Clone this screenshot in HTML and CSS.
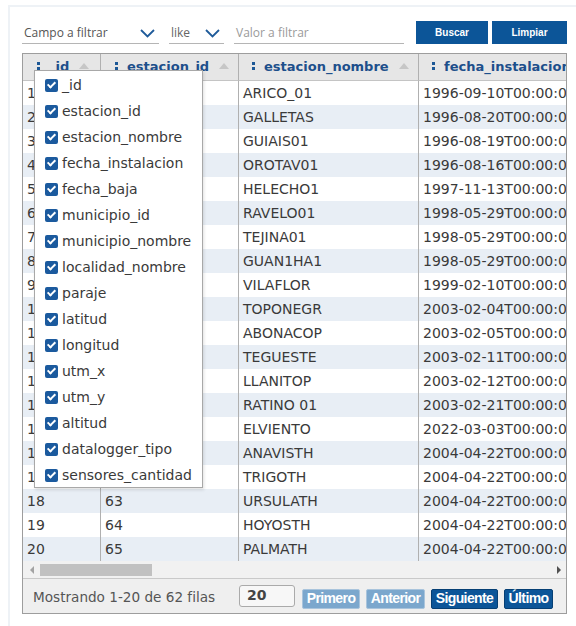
FILE: index.html
```html
<!DOCTYPE html>
<html lang="es">
<head>
<meta charset="utf-8">
<title>Estaciones</title>
<link rel="stylesheet" href="styles.css">
</head>
<body>
<div class="page">
  <div class="filters">
    <div class="select sel-field">
      <span>Campo a filtrar</span>
      <svg class="chev" width="15" height="9" viewBox="0 0 15 9"><polyline points="1,1 7.5,7.5 14,1" fill="none" stroke="#1f5b9a" stroke-width="1.8"/></svg>
    </div>
    <div class="select sel-op">
      <span>like</span>
      <svg class="chev" width="15" height="9" viewBox="0 0 15 9"><polyline points="1,1 7.5,7.5 14,1" fill="none" stroke="#1f5b9a" stroke-width="1.8"/></svg>
    </div>
    <div class="text-input"><span class="ph">Valor a filtrar</span></div>
    <button class="btn-main btn-search">Buscar</button>
    <button class="btn-main btn-clear">Limpiar</button>
  </div>

  <div class="grid">
    <div class="grid-body">
      <table class="data">
        <thead>
          <tr>
            <th class="c1"><svg class="dots" width="3" height="8" viewBox="0 0 3 8"><rect x="0" y="0" width="3" height="3"/><rect x="0" y="5" width="3" height="3"/></svg>_id<span class="sort"></span></th>
            <th class="c2"><svg class="dots" width="3" height="8" viewBox="0 0 3 8"><rect x="0" y="0" width="3" height="3"/><rect x="0" y="5" width="3" height="3"/></svg>estacion_id<span class="sort"></span></th>
            <th class="c3"><svg class="dots" width="3" height="8" viewBox="0 0 3 8"><rect x="0" y="0" width="3" height="3"/><rect x="0" y="5" width="3" height="3"/></svg>estacion_nombre<span class="sort"></span></th>
            <th class="c4"><svg class="dots" width="3" height="8" viewBox="0 0 3 8"><rect x="0" y="0" width="3" height="3"/><rect x="0" y="5" width="3" height="3"/></svg>fecha_instalacion<span class="sort"></span></th>
            <th class="c5"><svg class="dots" width="3" height="8" viewBox="0 0 3 8"><rect x="0" y="0" width="3" height="3"/><rect x="0" y="5" width="3" height="3"/></svg>fecha_baja<span class="sort"></span></th>
          </tr>
        </thead>
        <tbody>
          <tr><td>1</td><td>1</td><td>ARICO_01</td><td>1996-09-10T00:00:00</td><td></td></tr>
          <tr><td>2</td><td>2</td><td>GALLETAS</td><td>1996-08-20T00:00:00</td><td></td></tr>
          <tr><td>3</td><td>3</td><td>GUIAIS01</td><td>1996-08-19T00:00:00</td><td></td></tr>
          <tr><td>4</td><td>4</td><td>OROTAV01</td><td>1996-08-16T00:00:00</td><td></td></tr>
          <tr><td>5</td><td>5</td><td>HELECHO1</td><td>1997-11-13T00:00:00</td><td></td></tr>
          <tr><td>6</td><td>6</td><td>RAVELO01</td><td>1998-05-29T00:00:00</td><td></td></tr>
          <tr><td>7</td><td>7</td><td>TEJINA01</td><td>1998-05-29T00:00:00</td><td></td></tr>
          <tr><td>8</td><td>8</td><td>GUAN1HA1</td><td>1998-05-29T00:00:00</td><td></td></tr>
          <tr><td>9</td><td>9</td><td>VILAFLOR</td><td>1999-02-10T00:00:00</td><td></td></tr>
          <tr><td>10</td><td>10</td><td>TOPONEGR</td><td>2003-02-04T00:00:00</td><td></td></tr>
          <tr><td>11</td><td>11</td><td>ABONACOP</td><td>2003-02-05T00:00:00</td><td></td></tr>
          <tr><td>12</td><td>12</td><td>TEGUESTE</td><td>2003-02-11T00:00:00</td><td></td></tr>
          <tr><td>13</td><td>13</td><td>LLANITOP</td><td>2003-02-12T00:00:00</td><td></td></tr>
          <tr><td>14</td><td>14</td><td>RATINO 01</td><td>2003-02-21T00:00:00</td><td></td></tr>
          <tr><td>15</td><td>15</td><td>ELVIENTO</td><td>2022-03-03T00:00:00</td><td></td></tr>
          <tr><td>16</td><td>61</td><td>ANAVISTH</td><td>2004-04-22T00:00:00</td><td></td></tr>
          <tr><td>17</td><td>62</td><td>TRIGOTH</td><td>2004-04-22T00:00:00</td><td></td></tr>
          <tr><td>18</td><td>63</td><td>URSULATH</td><td>2004-04-22T00:00:00</td><td></td></tr>
          <tr><td>19</td><td>64</td><td>HOYOSTH</td><td>2004-04-22T00:00:00</td><td></td></tr>
          <tr><td>20</td><td>65</td><td>PALMATH</td><td>2004-04-22T00:00:00</td><td></td></tr>
        </tbody>
      </table>
    </div>
    <div class="hscroll">
      <span class="arr arr-l"></span>
      <span class="thumb"></span>
      <span class="arr arr-r"></span>
    </div>
    <div class="pager">
      <span class="count">Mostrando 1-20 de 62 filas</span>
      <span class="size">20</span>
      <button class="pbtn off b-first">Primero</button>
      <button class="pbtn off b-prev">Anterior</button>
      <button class="pbtn b-next">Siguiente</button>
      <button class="pbtn b-last">Último</button>
    </div>

    <ul class="col-menu">
      <li><span class="cb"></span>_id</li>
      <li><span class="cb"></span>estacion_id</li>
      <li><span class="cb"></span>estacion_nombre</li>
      <li><span class="cb"></span>fecha_instalacion</li>
      <li><span class="cb"></span>fecha_baja</li>
      <li><span class="cb"></span>municipio_id</li>
      <li><span class="cb"></span>municipio_nombre</li>
      <li><span class="cb"></span>localidad_nombre</li>
      <li><span class="cb"></span>paraje</li>
      <li><span class="cb"></span>latitud</li>
      <li><span class="cb"></span>longitud</li>
      <li><span class="cb"></span>utm_x</li>
      <li><span class="cb"></span>utm_y</li>
      <li><span class="cb"></span>altitud</li>
      <li><span class="cb"></span>datalogger_tipo</li>
      <li><span class="cb"></span>sensores_cantidad</li>
    </ul>
  </div>
</div>
</body>
</html>
```

FILE: styles.css
```css
html, body {
  margin: 0;
  padding: 0;
  background: #fff;
}

body {
  font-family: "DejaVu Sans", sans-serif;
  color: #3a3a3a;
  overflow: hidden;
}

.page {
  margin: 5px 0 0 8px;
  border-top: 2px solid #eef2f6;
  border-left: 2px solid #eef2f6;
  padding: 14px 0 40px 12px;
}

/* ---------- filter bar ---------- */
.filters {
  display: flex;
  align-items: flex-end;
  height: 23px;
  font-family: "Open Sans", sans-serif;
  font-size: 12px;
}

.select {
  display: flex;
  align-items: center;
  justify-content: space-between;
  box-sizing: border-box;
  height: 23px;
  border-bottom: 1px solid #b5b5b5;
  padding: 0 4px 0 2px;
  color: #555;
}

.sel-field { width: 137px; }
.sel-op { width: 55px; margin-left: 10px; color: #666; }

.chev { margin-top: 3px; }

.text-input {
  display: flex;
  align-items: center;
  box-sizing: border-box;
  width: 170px;
  height: 23px;
  margin-left: 10px;
  border-bottom: 1px solid #b5b5b5;
  padding-left: 2px;
}

.ph { color: #9a9a9a; }

.btn-main {
  box-sizing: border-box;
  height: 23px;
  border: 0;
  background: #0c5598;
  color: #fff;
  font-family: "Liberation Sans", sans-serif;
  font-weight: bold;
  font-size: 10px;
  padding: 0;
}

.btn-search { width: 72px; margin-left: 12px; }
.btn-clear { width: 75px; margin-left: 4px; }

/* ---------- grid ---------- */
.grid {
  position: relative;
  box-sizing: border-box;
  width: 545px;
  margin-top: 9px;
  border: 1px solid #9d9d9d;
}

.grid-body {
  overflow: hidden;
}

.data {
  table-layout: fixed;
  border-collapse: separate;
  border-spacing: 0;
  width: 760px;
}

.data th {
  box-sizing: border-box;
  height: 27px;
  background: #e6e6e6;
  border-right: 1px solid #b0b0b0;
  border-bottom: 1px solid #c4c4c4;
  padding: 0 0 0 13px;
  text-align: left;
  vertical-align: middle;
  font-size: 13px;
  line-height: 16px;
  font-weight: bold;
  color: #1d4f8b;
  white-space: nowrap;
  overflow: hidden;
}

.data th.c1 { width: 78px; padding-left: 14px; }
.data th.c2 { width: 138px; padding-left: 14px; }
.data th.c3 { width: 180px; }
.data th.c4 { width: 210px; }
.data th.c5 { width: 154px; }

.dots {
  fill: #1d5896;
  margin-right: 9px;
  vertical-align: 1px;
}

.sort {
  display: inline-block;
  width: 0;
  height: 0;
  margin-left: 10px;
  border-left: 5px solid transparent;
  border-right: 5px solid transparent;
  border-bottom: 6px solid #c6c6c6;
  vertical-align: 2px;
}

.data td {
  box-sizing: border-box;
  height: 24px;
  padding: 0 4px;
  border-right: 1px solid #b0b0b0;
  font-size: 14px;
  color: #3a3a3a;
  white-space: nowrap;
  overflow: hidden;
}

.data tbody tr:nth-child(even) td {
  background: #e8eef5;
}

/* ---------- horizontal scroll bar ---------- */
.hscroll {
  display: flex;
  align-items: center;
  height: 17px;
  background: #f1f1f1;
  padding: 0 5px;
}

.arr {
  width: 0;
  height: 0;
  border-top: 4px solid transparent;
  border-bottom: 4px solid transparent;
}

.arr-l {
  border-right: 4px solid #a3a3a3;
  margin-left: 2px;
}

.arr-r {
  border-left: 4px solid #505050;
  margin-left: auto;
}

.thumb {
  width: 112px;
  height: 12px;
  margin-left: 6px;
  background: #c1c1c1;
}

/* ---------- pager ---------- */
.pager {
  display: flex;
  align-items: center;
  box-sizing: border-box;
  height: 35px;
  border-top: 1px solid #c9c9c9;
  background: #efefef;
  padding-left: 10px;
}

.count {
  flex: 0 0 206px;
  margin-top: 2px;
  font-size: 13.6px;
  color: #555;
}

.size {
  flex: 0 0 auto;
  box-sizing: border-box;
  width: 56px;
  height: 22px;
  margin-top: -1px;
  border: 1px solid #aaa;
  border-radius: 3px;
  background: #f7f7f7;
  padding: 0 0 0 7px;
  font-size: 14px;
  font-weight: bold;
  color: #444;
  line-height: 19px;
}

.pbtn {
  flex: 0 0 auto;
  box-sizing: border-box;
  height: 20px;
  margin: 5px 0 0 6px;
  padding: 0;
  border: 1px solid #063f74;
  border-radius: 2px;
  background: #0c5598;
  color: #fff;
  font-family: "Liberation Sans", sans-serif;
  font-weight: bold;
  font-size: 14px;
  letter-spacing: -0.6px;
  line-height: 17px;
  text-align: center;
}

.b-first { width: 58px; margin-left: 7px; }
.b-prev { width: 59px; }
.b-next { width: 67px; }
.b-last { width: 49px; }

.pbtn.off {
  background: #7ba7cd;
  border-color: #a9c4dc;
}

/* ---------- column chooser menu ---------- */
.col-menu {
  position: absolute;
  left: 11px;
  top: 16px;
  box-sizing: border-box;
  width: 169px;
  height: 418px;
  margin: 0;
  padding: 1px 0 0 0;
  list-style: none;
  background: #fff;
  border: 1px solid #a8a8a8;
  box-shadow: 1px 2px 3px rgba(0, 0, 0, 0.12);
}

.col-menu li {
  display: flex;
  align-items: center;
  height: 26px;
  padding-left: 10px;
  font-size: 14px;
  color: #3a3a3a;
  white-space: nowrap;
}

.cb {
  position: relative;
  box-sizing: border-box;
  width: 13px;
  height: 13px;
  margin-right: 4px;
  border-radius: 2px;
  background: #1b5a9e;
}

.cb::after {
  content: "";
  position: absolute;
  left: 4px;
  top: 1.5px;
  width: 3px;
  height: 6px;
  border-right: 2px solid #fff;
  border-bottom: 2px solid #fff;
  transform: rotate(45deg);
}
```
